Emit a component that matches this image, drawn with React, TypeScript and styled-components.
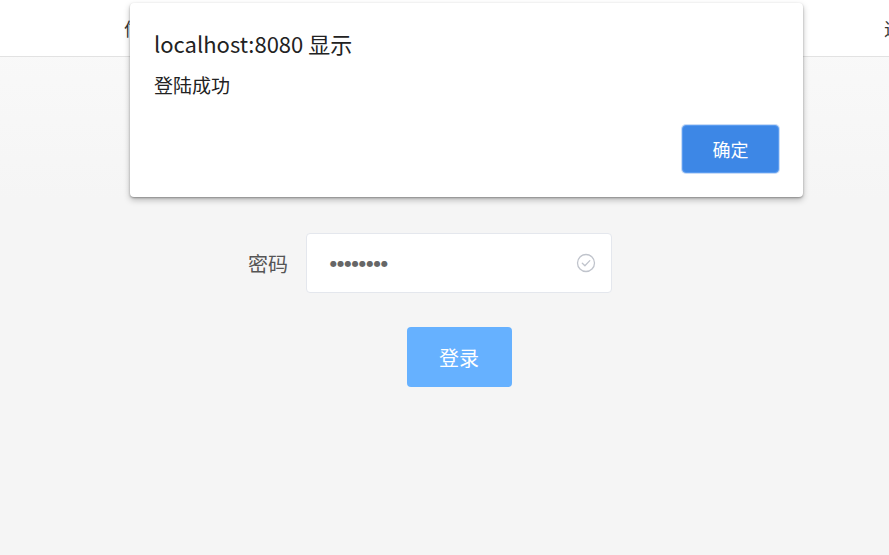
import React from "react";
import styled, { createGlobalStyle } from "styled-components";

const Global = createGlobalStyle`
  html, body { margin: 0; padding: 0; }
  body {
    width: 889px;
    height: 555px;
    overflow: hidden;
    background: #f6f6f6;
    font-family: "Noto Sans CJK SC", "Noto Sans", sans-serif;
  }
`;

const Page = styled.div`
  position: relative;
  width: 889px;
  height: 555px;
  background: linear-gradient(#fafafa, #f5f5f5 200px);
  display: flex;
  flex-direction: column;
`;

const Header = styled.header`
  height: 56px;
  flex: none;
  background: #ffffff;
  border-bottom: 1px solid #e2e2e2;
  display: flex;
  align-items: center;
  padding: 0 0 0 124px;
  overflow: hidden;
  font-size: 18px;
  color: #333;
`;

const Brand = styled.span`
  flex: 1;
`;
const HeaderRight = styled.span`
  flex: none;
  width: 5px;
  overflow: hidden;
  white-space: nowrap;
`;

const Form = styled.form`
  display: flex;
  flex-direction: column;
  gap: 36px;
  padding-top: 80px;
  padding-left: 226px;
`;

const Row = styled.div`
  display: flex;
  align-items: center;
`;

const Label = styled.label`
  width: 80px;
  box-sizing: border-box;
  padding-right: 18px;
  text-align: right;
  font-size: 20px;
  color: #555;
`;

const Field = styled.div`
  width: 306px;
  height: 60px;
  box-sizing: border-box;
  background: #fff;
  border: 1px solid #e4e7ed;
  border-radius: 4px;
  display: flex;
  align-items: center;
  justify-content: space-between;
  padding: 0 15px 0 23px;
`;

const Dots = styled.span`
  font-family: "DejaVu Sans", sans-serif;
  font-size: 8px;
  letter-spacing: 0.3px;
  color: #666;
`;

const FieldText = styled.span`
  font-size: 16px;
  color: #555;
`;

const Actions = styled.div`
  display: flex;
  justify-content: center;
  width: 306px;
  margin-left: 80px;
  margin-top: -2px;
`;

const LoginButton = styled.button`
  width: 105px;
  height: 60px;
  border: none;
  border-radius: 4px;
  background: #66b1ff;
  color: #fff;
  font-family: inherit;
  font-size: 20px;
`;

const Dialog = styled.div`
  position: absolute;
  left: 130px;
  top: 3px;
  width: 673px;
  height: 194px;
  box-sizing: border-box;
  background: #fff;
  border-radius: 4px;
  box-shadow: 0 1px 2px rgba(0, 0, 0, 0.3), 0 3px 6px rgba(0, 0, 0, 0.25);
  padding: 24px 24px 0 24px;
  display: flex;
  flex-direction: column;
`;

const DialogTitle = styled.div`
  font-size: 22px;
  color: #222;
  line-height: 32px;
`;

const DialogMessage = styled.div`
  margin-top: 13px;
  font-size: 19px;
  color: #222;
  line-height: 26px;
`;

const DialogFooter = styled.div`
  display: flex;
  justify-content: flex-end;
  margin-top: 27px;
`;

const OkButton = styled.button`
  width: 97px;
  height: 48px;
  border: 1px solid #5b9cf0;
  border-radius: 4px;
  background: #3d87e6;
  color: #fff;
  font-family: inherit;
  font-size: 18px;
  box-shadow: 0 0 0 1px #c9dcf6;
`;

const CheckIcon = () => (
  <svg width="20" height="20" viewBox="0 0 20 20" fill="none">
    <circle cx="10" cy="10" r="8.5" stroke="#c0c4cc" strokeWidth="1.3" />
    <path d="M6.3 10.2 L8.9 12.7 L13.8 7.6" stroke="#c0c4cc" strokeWidth="1.3" strokeLinecap="round" strokeLinejoin="round" />
  </svg>
);

export default function App() {
  return (
    <>
      <Global />
      <Page>
        <Header>
          <Brand>信息管理系统</Brand>
          <HeaderRight>退出</HeaderRight>
        </Header>
        <Form onSubmit={(e) => e.preventDefault()}>
          <Row>
            <Label>用户名</Label>
            <Field>
              <FieldText>admin</FieldText>
              <CheckIcon />
            </Field>
          </Row>
          <Row>
            <Label>密码</Label>
            <Field>
              <Dots>●●●●●●●●</Dots>
              <CheckIcon />
            </Field>
          </Row>
          <Actions>
            <LoginButton type="button">登录</LoginButton>
          </Actions>
        </Form>
        <Dialog>
          <DialogTitle>localhost:8080 显示</DialogTitle>
          <DialogMessage>登陆成功</DialogMessage>
          <DialogFooter>
            <OkButton>确定</OkButton>
          </DialogFooter>
        </Dialog>
      </Page>
    </>
  );
}
